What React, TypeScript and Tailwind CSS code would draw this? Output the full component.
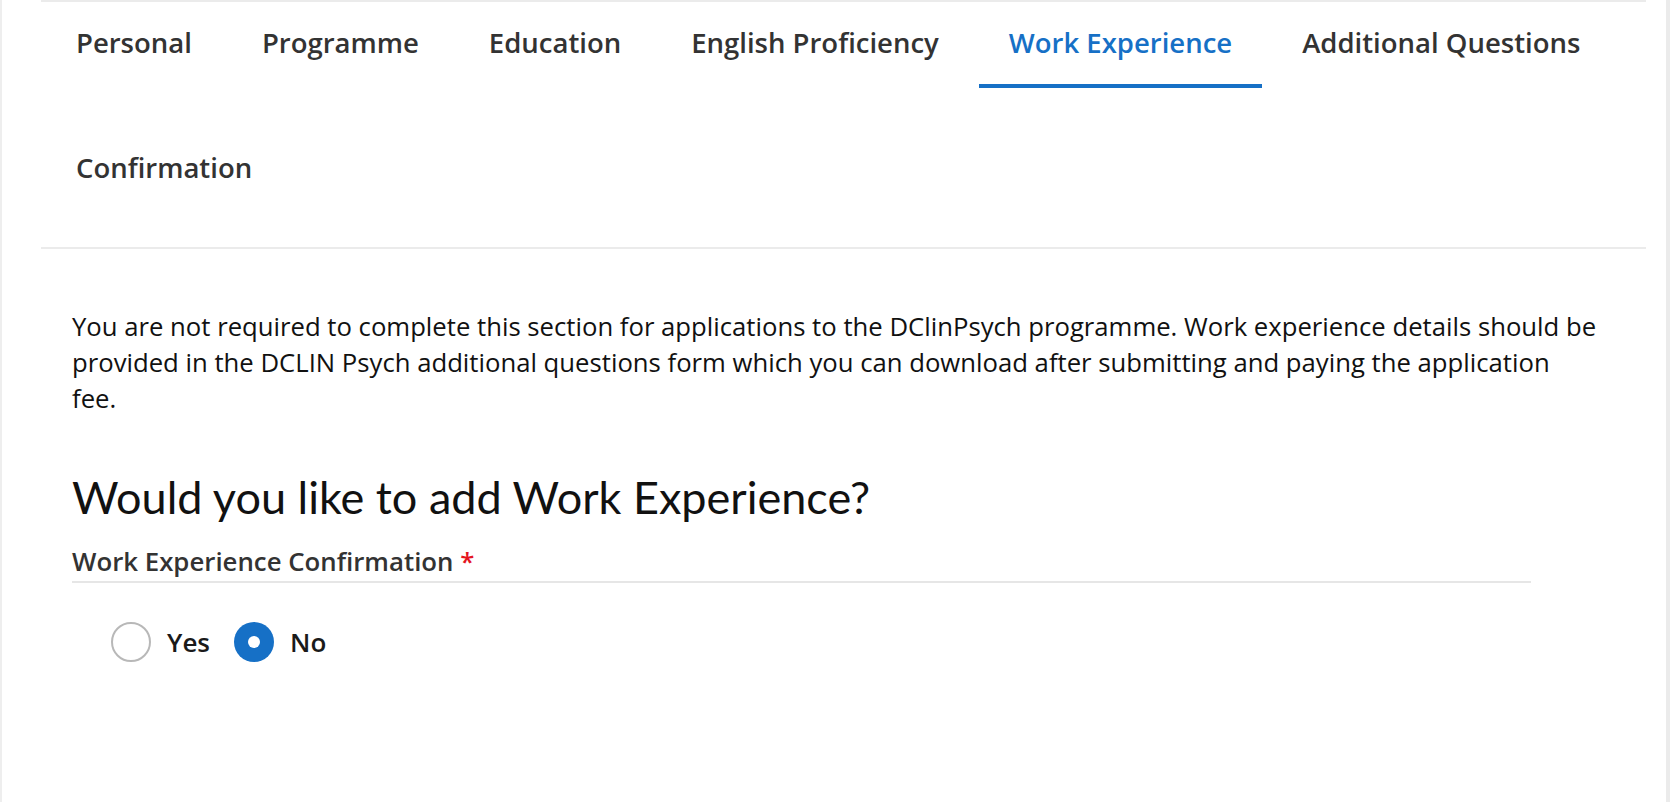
import React from "react";

const tabs = [
  "Personal",
  "Programme",
  "Education",
  "English Proficiency",
  "Work Experience",
  "Additional Questions",
  "Confirmation",
];

export default function App() {
  return (
    <div
      className="w-full h-[802px] bg-white flex border-l-2 border-r-4 border-l-[#eeeeee] border-r-[#ebebeb]"
      style={{ fontFamily: '"Open Sans", "Noto Sans", sans-serif' }}
    >
      <div className="flex-1 ml-[39px] mr-[20px] flex flex-col">
        <div className="flex flex-wrap gap-y-[39px] pb-[34px] border-t-2 border-b-2 border-[#ebebeb]">
          {tabs.map((t) => {
            const active = t === "Work Experience";
            return (
              <div
                key={t}
                className={
                  active
                    ? "mx-[5px] px-[30px] pt-[22px] pb-[22px] border-b-4 border-[#1670c6] text-[#1670c6] text-[27.5px] leading-[38px] font-semibold"
                    : "mx-[5px] px-[30px] pt-[22px] pb-[22px] border-b-4 border-transparent text-[#333333] text-[27.5px] leading-[38px] font-semibold"
                }
              >
                {t}
              </div>
            );
          })}
        </div>
        <div className="pl-[31px]">
          <p className="mt-[60px] w-[1550px] text-[25.7px] leading-[36px] text-[#111111]">
            You are not required to complete this section for applications to the DClinPsych programme. Work experience details should be provided in the DCLIN Psych additional questions form which you can download after submitting and paying the application
            <br />
            fee.
          </p>
          <h2
            className="mt-[53px] text-[45px] leading-[54px] text-[#111111] font-normal"
            style={{ fontFamily: 'Lato, "Noto Sans", sans-serif' }}
          >
            Would you like to add Work Experience?
          </h2>
          <div className="mt-[20px] w-[1459px] pb-[2px] border-b-2 border-[#e6e6e6] text-[25.8px] leading-[35px] font-semibold text-[#333333]">
            Work Experience Confirmation <span className="text-[#e4151f]">*</span>
          </div>
          <div className="mt-[39px] pl-[39px] flex items-center">
            <div className="w-[40px] h-[40px] rounded-full border-2 border-[#b8b8b8] bg-white"></div>
            <span className="ml-[16px] text-[26px] leading-[36px] font-semibold text-[#1a1a1a]">Yes</span>
            <div className="ml-[24px] w-[40px] h-[40px] rounded-full bg-[#1670c6] flex items-center justify-center">
              <div className="w-[12px] h-[12px] rounded-full bg-white"></div>
            </div>
            <span className="ml-[16px] text-[26px] leading-[36px] font-semibold text-[#1a1a1a]">No</span>
          </div>
        </div>
      </div>
    </div>
  );
}
